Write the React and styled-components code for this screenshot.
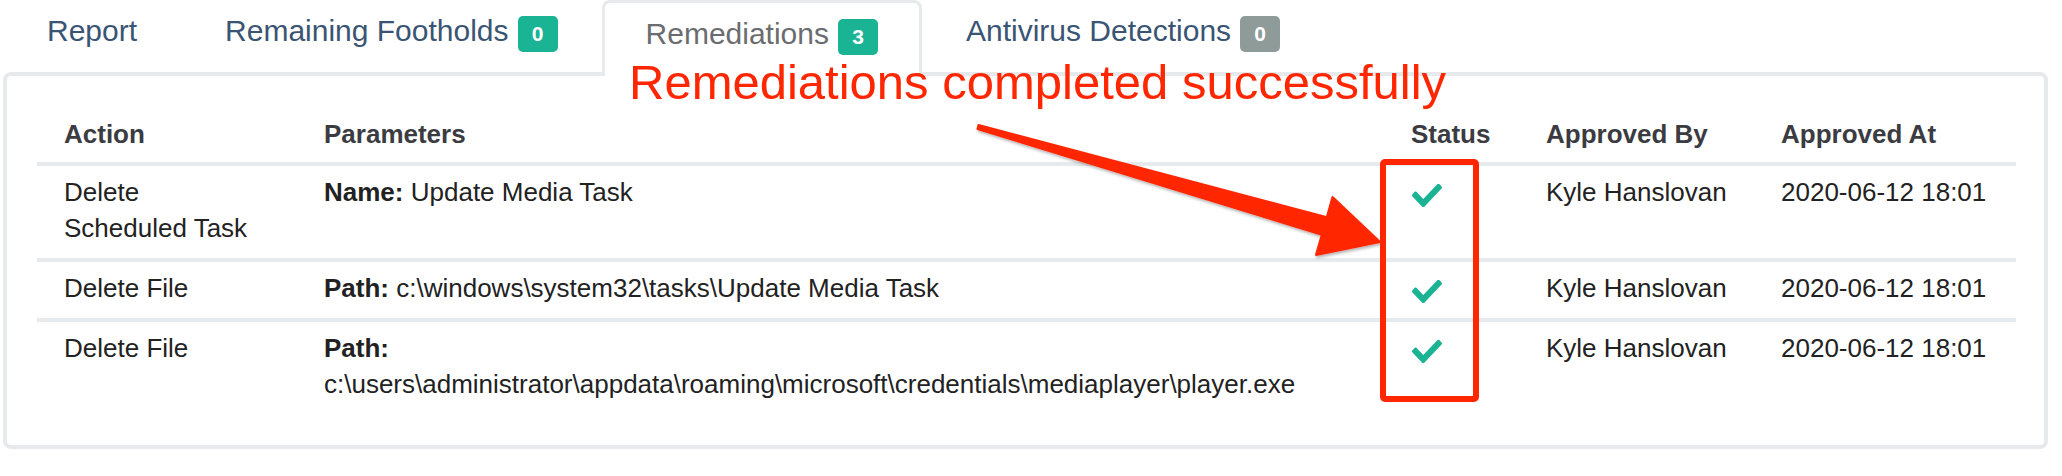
import React from "react";
import styled, { createGlobalStyle } from "styled-components";

const colors = {
  tab: "#3a5574",
  tabActive: "#6b6c70",
  line: "#e7eaec",
  green: "#1ab394",
  grey: "#8e9b99",
  head: "#3b3b42",
  text: "#222222",
  red: "#ff2600",
};

const tabs = [
  { label: "Report" },
  { label: "Remaining Footholds", count: 0, tone: "green" },
  { label: "Remediations", count: 3, tone: "green", active: true },
  { label: "Antivirus Detections", count: 0, tone: "grey" },
];

const rows = [
  {
    action: "Delete Scheduled Task",
    key: "Name:",
    value: "Update Media Task",
  },
  {
    action: "Delete File",
    key: "Path:",
    value: "c:\\windows\\system32\\tasks\\Update Media Task",
  },
  {
    action: "Delete File",
    key: "Path:",
    value:
      "c:\\users\\administrator\\appdata\\roaming\\microsoft\\credentials\\mediaplayer\\player.exe",
    wrap: true,
  },
];

function Check() {
  return (
    <CheckIcon viewBox="0 70 512 374" preserveAspectRatio="none">
      <path
        fill={colors.green}
        d="M173.898 439.404l-166.4-166.4c-9.997-9.997-9.997-26.206 0-36.204l36.203-36.204c9.997-9.998 26.207-9.998 36.204 0L192 312.69 432.095 72.596c9.997-9.997 26.207-9.997 36.204 0l36.203 36.204c9.997 9.997 9.997 26.206 0 36.204l-294.4 294.401c-9.998 9.997-26.207 9.997-36.204-.001z"
      />
    </CheckIcon>
  );
}

function App() {
  return (
    <>
      <GlobalStyle />
      <Page>
        <TabBar>
          {tabs.map((tab) => (
            <Tab key={tab.label} active={tab.active}>
              {tab.label}
              {tab.count !== undefined && (
                <Badge tone={tab.tone}>{tab.count}</Badge>
              )}
            </Tab>
          ))}
        </TabBar>

        <Panel>
          <Table>
            <colgroup>
              <col style={{ width: 260 }} />
              <col style={{ width: 1087 }} />
              <col style={{ width: 135 }} />
              <col style={{ width: 235 }} />
              <col style={{ width: 262 }} />
            </colgroup>
            <thead>
              <tr>
                <Th>Action</Th>
                <Th>Parameters</Th>
                <Th>Status</Th>
                <Th>Approved By</Th>
                <Th>Approved At</Th>
              </tr>
            </thead>
            <tbody>
              {rows.map((row, i) => (
                <Row key={i}>
                  <Td>
                    <ActionText>{row.action}</ActionText>
                  </Td>
                  <Td>
                    <b>{row.key}</b> <Value wrap={row.wrap}>{row.value}</Value>
                  </Td>
                  <Td>
                    <Check />
                  </Td>
                  <Td>Kyle Hanslovan</Td>
                  <Td>2020-06-12 18:01</Td>
                </Row>
              ))}
            </tbody>
          </Table>
        </Panel>

        {/* annotation layer */}
        <Note>Remediations completed successfully</Note>
        <Overlay width="2062" height="476" viewBox="0 0 2062 476">
          <defs>
            <filter id="shadow" x="-10%" y="-10%" width="120%" height="140%">
              <feDropShadow dx="1" dy="2" stdDeviation="1.5" floodColor="#000" floodOpacity="0.3" />
            </filter>
          </defs>
          <polygon
            filter="url(#shadow)"
            fill={colors.red}
            stroke={colors.red}
            strokeWidth="2"
            strokeLinejoin="round"
            points="978.5,125 1326.8,217.3 1332.5,197.1 1380,242 1316,254.9 1321.8,234.7 977.5,129"
          />
          <rect
            x="1383"
            y="162"
            width="93"
            height="237"
            rx="2"
            fill="none"
            stroke={colors.red}
            strokeWidth="6"
          />
        </Overlay>
      </Page>
    </>
  );
}

export default App;

const GlobalStyle = createGlobalStyle`
  html, body {
    margin: 0;
    padding: 0;
    background: #ffffff;
  }
  body {
    font-family: "Liberation Sans", Arial, sans-serif;
  }
`;

const Page = styled.div`
  position: relative;
  width: 2062px;
  height: 476px;
  padding-left: 3px;
  box-sizing: border-box;
  overflow: hidden;
`;

const TabBar = styled.div`
  display: flex;
  align-items: flex-end;
  height: 72px;
`;

const Tab = styled.div`
  position: relative;
  z-index: 1;
  box-sizing: border-box;
  height: ${(p) => (p.active ? "76px" : "72px")};
  margin-bottom: ${(p) => (p.active ? "-4px" : "0")};
  padding: ${(p) => (p.active ? "13px" : "10px")} 41px 0;
  border: 3px solid ${(p) => (p.active ? colors.line : "transparent")};
  border-bottom: 0;
  border-radius: 8px 8px 0 0;
  background: ${(p) => (p.active ? "#ffffff" : "transparent")};
  color: ${(p) => (p.active ? colors.tabActive : colors.tab)};
  font-size: 30px;
  line-height: 36px;
  white-space: nowrap;
`;

const Badge = styled.span`
  display: inline-block;
  width: 40px;
  margin-left: 9px;
  padding: 6px 0;
  border-radius: 5px;
  background: ${(p) => (p.tone === "grey" ? colors.grey : colors.green)};
  color: #ffffff;
  font-size: 21px;
  font-weight: bold;
  line-height: 24px;
  text-align: center;
`;

const Panel = styled.div`
  width: 2045px;
  box-sizing: border-box;
  border: 4px solid ${colors.line};
  border-radius: 8px;
  padding: 32px 27px 31px 30px;
  background: #ffffff;
`;

const Table = styled.table`
  width: 1979px;
  table-layout: fixed;
  border-collapse: collapse;
  font-size: 26px;
  line-height: 36px;
`;

const Th = styled.th`
  padding: 8px 8px 10px 27px;
  text-align: left;
  font-weight: bold;
  color: ${colors.head};
  border-bottom: 4px solid ${colors.line};
`;

const Row = styled.tr`
  & + & > td {
    border-top: 4px solid ${colors.line};
  }
`;

const Td = styled.td`
  padding: 8px 8px 12px 27px;
  vertical-align: top;
  color: ${colors.text};

  b {
    font-weight: bold;
  }
`;

const Value = styled.span`
  display: ${(p) => (p.wrap ? "block" : "inline")};
`;

const ActionText = styled.div`
  max-width: 200px;
`;

const CheckIcon = styled.svg`
  display: block;
  width: 30px;
  height: 23px;
  margin: 10px 0 0 1px;
`;

const Note = styled.div`
  position: absolute;
  left: 629px;
  top: 58px;
  z-index: 2;
  color: ${colors.red};
  font-size: 49px;
  line-height: 49px;
  white-space: nowrap;
`;

const Overlay = styled.svg`
  position: absolute;
  left: 0;
  top: 0;
  z-index: 2;
  pointer-events: none;
`;
